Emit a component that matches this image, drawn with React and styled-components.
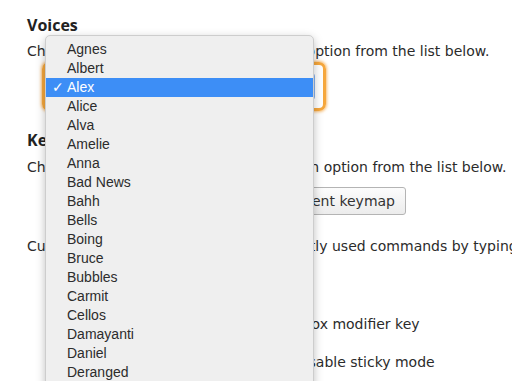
import React from 'react';
import styled, { createGlobalStyle } from 'styled-components';

const GlobalStyle = createGlobalStyle`
    html, body {
        margin: 0;
        padding: 0;
        background: #ffffff;
        overflow: hidden;
    }
`;

const Page = styled.div`
    position: relative;
    width: 512px;
    height: 381px;
    overflow: hidden;
    padding: 15px 0 0 27px;
    box-sizing: border-box;
    font-family: 'DejaVu Sans', Verdana, sans-serif;
    font-size: 14px;
    color: #2b2b2b;
    white-space: nowrap;
`;

const Heading = styled.h2`
    margin: ${({top}) => top || 0}px 0 0 0;
    font-family: 'Open Sans', 'DejaVu Sans', sans-serif;
    font-weight: 700;
    font-size: 16px;
    line-height: 20px;
    color: #222;
`;

const Text = styled.p`
    margin: ${({top}) => top || 0}px 0 0 ${({indent}) => indent || 0}px;
    line-height: 18px;
`;

const FocusRing = styled.div`
    display: inline-block;
    margin: 2px 0 0 15px;
    padding: 8px;
    border: 3px solid #f6a73c;
    border-radius: 7px;
    box-shadow: 0 0 3px 1px rgba(246, 160, 50, 0.7);
`;

const SelectBox = styled.div`
    width: 260px;
    height: 25px;
    border: 1px solid #86b2ef;
    border-radius: 3px;
    background: #fff;
`;

const ButtonRow = styled.div`
    display: flex;
    justify-content: flex-end;
    width: 379px;
    margin-top: 11px;
`;

const Button = styled.button`
    height: 28px;
    padding: 0 10px;
    font-family: 'DejaVu Sans', Verdana, sans-serif;
    font-size: 14px;
    color: #333;
    background: linear-gradient(#fcfcfc, #ececec);
    border: 1px solid #b4b4b4;
    border-radius: 3px;
`;

const Check = styled.input`
    margin: 0 6px 0 0;
    vertical-align: -2px;
`;

const Menu = styled.ul`
    position: absolute;
    left: 45px;
    top: 35px;
    width: 269px;
    height: 360px;
    margin: 0;
    padding: 4px 0 0;
    list-style: none;
    box-sizing: border-box;
    background: #efefef;
    border: 1px solid #cdcdcd;
    border-radius: 5px;
    box-shadow: 0 3px 10px rgba(0, 0, 0, 0.25);
    font-family: 'Liberation Sans', Arial, sans-serif;
    font-size: 14px;
`;

const Item = styled.li`
    position: relative;
    height: 19px;
    line-height: 19px;
    padding-left: 21px;
    color: ${({selected}) => (selected ? '#fff' : '#2c2c2c')};
    background: ${({selected}) => (selected ? '#3d8ef6' : 'transparent')};
`;

const Tick = styled.span`
    position: absolute;
    left: 6px;
    top: 0;
    font-family: 'DejaVu Sans', sans-serif;
    font-size: 14px;
    font-weight: 700;
`;

const voices = [
    'Agnes', 'Albert', 'Alex', 'Alice', 'Alva', 'Amelie', 'Anna', 'Bad News',
    'Bahh', 'Bells', 'Boing', 'Bruce', 'Bubbles', 'Carmit', 'Cellos',
    'Damayanti', 'Daniel', 'Deranged',
];

export default function App() {
    return (
        <>
            <GlobalStyle />
            <Page>
                <Heading>Voices</Heading>
                <Text top={7}>Change the speech voice by picking an option from the list below.</Text>
                <FocusRing>
                    <SelectBox />
                </FocusRing>

                <Heading top={16}>Keymaps</Heading>
                <Text top={8}>Change the keyboard setup by picking an option from the list below.</Text>
                <ButtonRow>
                    <Button>Export current keymap</Button>
                </ButtonRow>

                <Text top={22}>Customize the hot keys for your frequently used commands by typing them below.</Text>
                <Text top={60} indent={121}>
                    <Check type="checkbox" />Use Shift as the Firefox modifier key
                </Text>
                <Text top={20} indent={124}>
                    <Check type="checkbox" />Check this box to disable sticky mode
                </Text>

                <Menu>
                    {voices.map((v) => (
                        <Item key={v} selected={v === 'Alex'}>
                            {v === 'Alex' && <Tick>✓</Tick>}
                            {v}
                        </Item>
                    ))}
                </Menu>
            </Page>
        </>
    );
}
